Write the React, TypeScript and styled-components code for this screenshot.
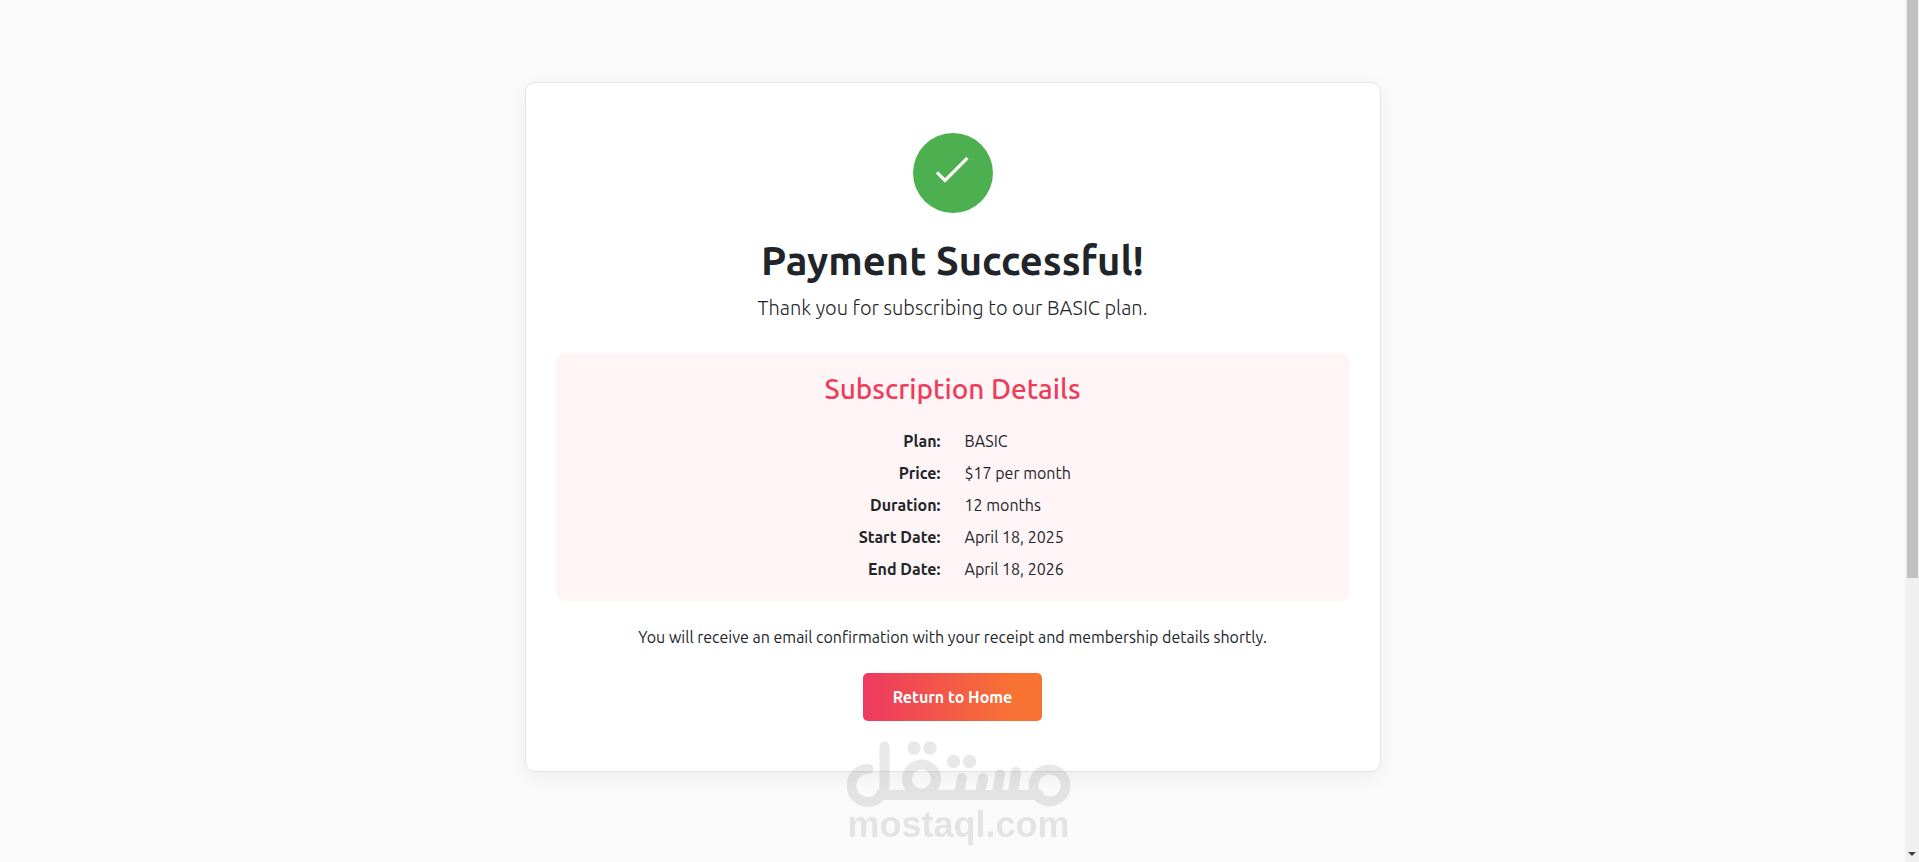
import React from "react";
import styled, { createGlobalStyle } from "styled-components";

const GlobalStyle = createGlobalStyle`
  *, *::before, *::after { box-sizing: border-box; }
  body {
    margin: 0;
    background: #fafafa;
    color: #212529;
    font-family: Ubuntu, "Open Sans", "Noto Sans", sans-serif;
    font-size: 16px;
    line-height: 24px;
  }
`;

const Shell = styled.div`
  display: flex;
  min-height: 100vh;
`;

const Main = styled.main`
  flex: 1;
  padding: 82px 12px;
`;

const Card = styled.section`
  display: flex;
  flex-direction: column;
  align-items: center;
  max-width: 856px;
  margin: 0 auto;
  padding: 50px 30px;
  background: #fff;
  border: 1px solid #e4e4e4;
  border-radius: 10px;
  box-shadow: 0 5px 20px rgba(0, 0, 0, 0.05);
  text-align: center;
`;

const SuccessBadge = styled.div`
  display: flex;
  align-items: center;
  justify-content: center;
  width: 80px;
  height: 80px;
  padding-bottom: 6px;
  margin-bottom: 24px;
  border-radius: 50%;
  background: #4caf50;
`;

const Title = styled.h1`
  margin: 0 0 8px;
  font-size: 40px;
  font-weight: 600;
  line-height: 48px;
`;

const Lead = styled.p`
  margin: 0 0 30px;
  font-size: 20px;
  font-weight: 300;
  line-height: 30px;
`;

const Details = styled.section`
  width: 100%;
  padding: 20px 20px 16px;
  margin-bottom: 24px;
  border-radius: 10px;
  background: #fff5f6;
`;

const DetailsTitle = styled.h2`
  margin: 0 0 20px;
  color: #ee3c5a;
  font-size: 28px;
  font-weight: 500;
  line-height: 32px;
`;

const DetailList = styled.dl`
  margin: 0;
`;

const DetailRow = styled.div`
  display: grid;
  grid-template-columns: 1fr 1fr;
  gap: 24px;
  padding: 4px 0;
`;

const Label = styled.dt`
  font-weight: 600;
  text-align: right;
`;

const Value = styled.dd`
  margin: 0;
  text-align: left;
`;

const Note = styled.p`
  margin: 0 0 24px;
`;

const HomeButton = styled.button`
  padding: 12px 30px;
  border: 0;
  border-radius: 5px;
  background: linear-gradient(90deg, #ee3c5e 5%, #f87333 85%);
  color: #fff;
  font: inherit;
  font-weight: 600;
  cursor: pointer;
`;

const ScrollTrack = styled.div`
  position: sticky;
  top: 0;
  display: flex;
  flex-direction: column;
  justify-content: space-between;
  align-items: center;
  width: 14px;
  height: 100vh;
  background: #f0f0f0;
`;

const ScrollThumb = styled.div`
  width: 11px;
  height: 67%;
  background: #c1c1c1;
`;

const ScrollArrow = styled.svg`
  margin-bottom: 6px;
`;

const Watermark = styled.div`
  position: fixed;
  bottom: 19px;
  left: 50%;
  display: flex;
  flex-direction: column;
  align-items: center;
  width: 224px;
  margin-left: -113px;
  color: #000;
  opacity: 0.09;
  pointer-events: none;
`;

const WatermarkText = styled.span`
  font-family: "Liberation Sans", Arial, sans-serif;
  font-size: 36px;
  font-weight: 700;
  line-height: 36px;
`;

const details = [
  { label: "Plan:", value: "BASIC" },
  { label: "Price:", value: "$17 per month" },
  { label: "Duration:", value: "12 months" },
  { label: "Start Date:", value: "April 18, 2025" },
  { label: "End Date:", value: "April 18, 2026" },
];

const CheckIcon = () => (
  <svg width="36" height="28" viewBox="0 0 36 28" fill="none" aria-hidden="true">
    <path d="M2 16.400 10 24.400 32.400 2" stroke="#fff" strokeWidth="3.200" />
  </svg>
);

const WatermarkLogo = () => (
  <svg width="224" height="66" viewBox="0 0 224 66" fill="none" stroke="currentColor" strokeLinecap="round" aria-hidden="true">
    <path strokeWidth="10" d="M21.5 28A16.5 16.5 0 1 0 37.5 44.5V5.5M33 54H192" />
    <circle cx="74.5" cy="38" r="14.5" strokeWidth="10" />
    <circle cx="202.500" cy="44.500" r="16" strokeWidth="10" />
    <path strokeWidth="10" d="M112 53 115 37M133 53 136 37M150 53 153 33M166 53 169 31" />
    <g fill="currentColor" stroke="none">
      <circle cx="67" cy="7" r="6.700" />
      <circle cx="83" cy="7" r="6.700" />
      <circle cx="106.500" cy="20.500" r="6.700" />
      <circle cx="122.500" cy="20.500" r="6.700" />
    </g>
  </svg>
);

export default function App() {
  return (
    <>
      <GlobalStyle />
      <Shell>
        <Main>
          <Card>
            <SuccessBadge>
              <CheckIcon />
            </SuccessBadge>
            <Title>Payment Successful!</Title>
            <Lead>Thank you for subscribing to our BASIC plan.</Lead>
            <Details>
              <DetailsTitle>Subscription Details</DetailsTitle>
              <DetailList>
                {details.map(({ label, value }) => (
                  <DetailRow key={label}>
                    <Label>{label}</Label>
                    <Value>{value}</Value>
                  </DetailRow>
                ))}
              </DetailList>
            </Details>
            <Note>You will receive an email confirmation with your receipt and membership details shortly.</Note>
            <HomeButton type="button">Return to Home</HomeButton>
          </Card>
        </Main>
        <ScrollTrack aria-hidden="true">
          <ScrollThumb />
          <ScrollArrow width="8" height="4" viewBox="0 0 8 4">
            <path d="M0 0H8L4 4Z" fill="#404040" />
          </ScrollArrow>
        </ScrollTrack>
      </Shell>
      <Watermark>
        <WatermarkLogo />
        <WatermarkText>mostaql.com</WatermarkText>
      </Watermark>
    </>
  );
}
